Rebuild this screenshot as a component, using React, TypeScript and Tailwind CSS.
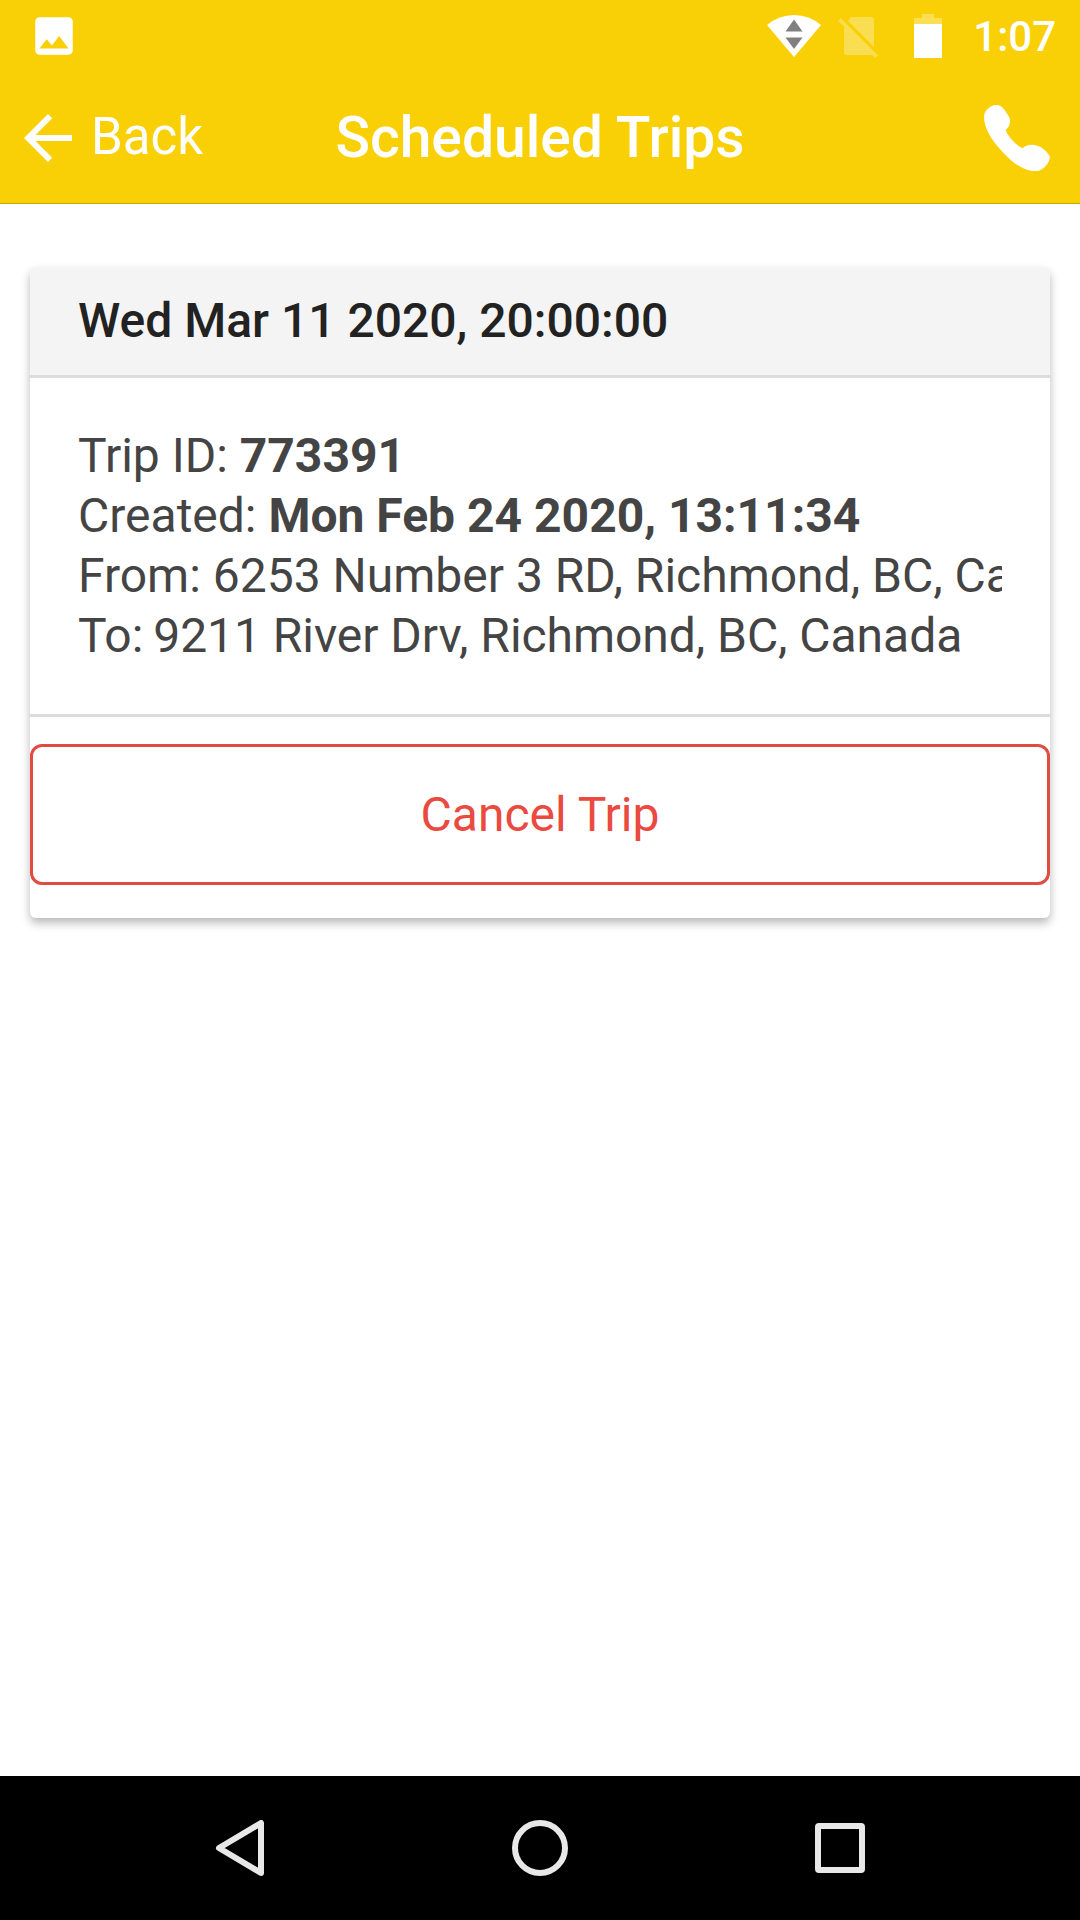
import { MdArrowBack, MdImage } from 'react-icons/md';

interface Trip {
  id: string;
  scheduledAt: string;
  createdAt: string;
  from: string;
  to: string;
}

const trips: Trip[] = [
  {
    id: '773391',
    scheduledAt: 'Wed Mar 11 2020, 20:00:00',
    createdAt: 'Mon Feb 24 2020, 13:11:34',
    from: '6253 Number 3 RD, Richmond, BC, Canada',
    to: '9211 River Drv, Richmond, BC, Canada'
  }
];

function PhoneIcon() {
  return (
    <svg className="size-[66px]" viewBox="0 0 198 198" fill="currentColor">
      <path d="M0 36C0 18 18 0 37 0C50 0 57 8 64 18L75 35C82 50 76 66 65 75C69 91 96 121 116 130C125 119 145 116 162 123C177 129 191 141 197 154C201 168 177 198 159 198C119 203 77 166 48 132C23 105 0 69 0 36Z" />
    </svg>
  );
}

function StatusBar() {
  return (
    <div className="flex h-[72px] items-center pl-[29px] pr-[24px]">
      <MdImage className="size-[50px]" />
      <div className="ml-auto flex items-center">
        {/* wifi with traffic arrows */}
        <svg className="h-[42px] w-[54px]" viewBox="0 0 54 42">
          <path d="M0 10Q12 0 27 0T54 10L27 42Z" fill="currentColor" />
          <path d="M18.5 16.5L27 4.5L35.5 16.5ZM18.5 22.5H35.5L27 34Z" fill="#808080" />
        </svg>
        {/* no sim */}
        <svg className="ml-[17px] mt-[2px] h-[42px] w-[40px] opacity-30" viewBox="0 0 40 42">
          <path d="M13 1H33Q36 1 36 4V31L10 5ZM6 9L36 39H9Q6 39 6 36Z" fill="currentColor" />
          <path d="M1.5 3.5L38.5 40.5" stroke="currentColor" strokeWidth="3.5" />
        </svg>
        {/* battery */}
        <svg className="ml-[36px] h-[44px] w-[28px]" viewBox="0 0 28 44">
          <path d="M0 10V4H8V0H20V4H28V10Z" fill="currentColor" opacity="0.3" />
          <path d="M0 10H28V44H0Z" fill="currentColor" />
        </svg>
        <span className="ml-[31px] pt-px text-[42px] font-medium leading-[49px]">1:07</span>
      </div>
    </div>
  );
}

function Header() {
  return (
    <header className="h-[204px] border-b border-[#c7a805] bg-[#f9d006] text-white">
      <StatusBar />
      <div className="grid h-[131px] grid-cols-[1fr_auto_1fr] items-center pl-[12px] pr-[12px]">
        <button className="flex items-center">
          <MdArrowBack className="size-[72px]" />
          <span className="mb-[2px] ml-[7px] text-[51px] leading-[60px]">Back</span>
        </button>
        <h1 className="text-[57px] font-medium leading-[66px]">Scheduled Trips</h1>
        <button className="mr-[18px] justify-self-end">
          <PhoneIcon />
        </button>
      </div>
    </header>
  );
}

function TripCard({ trip }: { trip: Trip }) {
  return (
    <div className="mx-[30px] mt-[63px] rounded-[6px] bg-white shadow-[0_5px_10px_0_rgba(0,0,0,0.28)]">
      <div className="h-[111px] rounded-t-[6px] border-b-[3px] border-[#dcdcdc] bg-[#f4f4f4] px-[48px] pt-[26px] text-[48px] font-medium leading-[56px] text-[#222222]">
        {trip.scheduledAt}
      </div>
      <div className="h-[339px] border-b-[3px] border-[#dcdcdc] px-[48px] pt-[48px] text-[48px] leading-[60px] text-[#444444]">
        <div className="overflow-hidden whitespace-nowrap">
          <p>Trip ID: <strong>{trip.id}</strong></p>
          <p>Created: <strong>{trip.createdAt}</strong></p>
          <p>From: {trip.from}</p>
          <p><span className="-mr-[2px]">To:</span> <span className="-tracking-[0.05px]">{trip.to}</span></p>
        </div>
      </div>
      <div className="pb-[33px] pt-[27px]">
        <button className="flex h-[141px] w-full items-center justify-center rounded-[12px] border-[3px] border-[#e04b42] text-[48px] text-[#ea4a40]">
          Cancel Trip
        </button>
      </div>
    </div>
  );
}

function NavigationBar() {
  return (
    <nav className="flex h-[144px] items-center justify-center gap-[244px] bg-black text-[#e8e8e8]">
      <svg className="size-[56px]" viewBox="0 0 56 56" fill="none" stroke="currentColor" strokeWidth="6" strokeLinejoin="round">
        <path d="M49 3V53L7 28Z" />
      </svg>
      <svg className="size-[56px]" viewBox="0 0 56 56" fill="none" stroke="currentColor" strokeWidth="6">
        <circle cx="28" cy="28" r="25" />
      </svg>
      <svg className="size-[56px]" viewBox="0 0 56 56" fill="none" stroke="currentColor" strokeWidth="6">
        <rect x="6" y="6" width="44" height="44" rx="1" />
      </svg>
    </nav>
  );
}

export default function App() {
  return (
    <div className="flex h-[1920px] w-[1080px] flex-col bg-white font-[Roboto,sans-serif]">
      <Header />
      <main className="flex-1">
        {trips.map((trip) => (
          <TripCard key={trip.id} trip={trip} />
        ))}
      </main>
      <NavigationBar />
    </div>
  );
}
